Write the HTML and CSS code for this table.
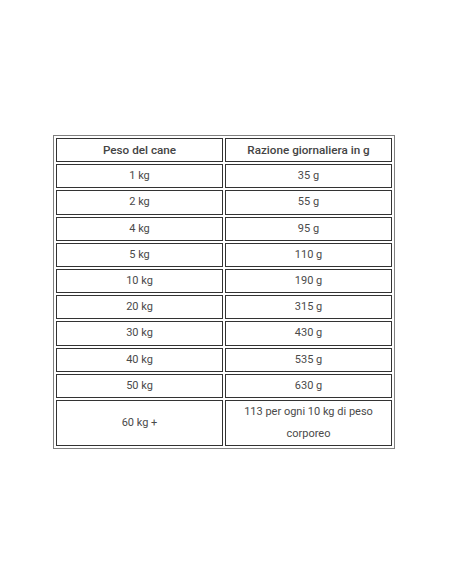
FILE: index.html
```html
<!DOCTYPE html>
<html lang="it">
<head>
<meta charset="utf-8">
<link rel="stylesheet" href="styles.css">
</head>
<body>
<div class="wrap">
<table class="razioni">
<thead>
<tr><th>Peso del cane</th><th>Razione giornaliera in g</th></tr>
</thead>
<tbody>
<tr><td>1 kg</td><td>35 g</td></tr>
<tr><td>2 kg</td><td>55 g</td></tr>
<tr><td>4 kg</td><td>95 g</td></tr>
<tr><td>5 kg</td><td>110 g</td></tr>
<tr><td>10 kg</td><td>190 g</td></tr>
<tr><td>20 kg</td><td>315 g</td></tr>
<tr><td>30 kg</td><td>430 g</td></tr>
<tr><td>40 kg</td><td>535 g</td></tr>
<tr><td>50 kg</td><td>630 g</td></tr>
<tr><td>60 kg +</td><td>113 per ogni 10 kg di peso corporeo</td></tr>
</tbody>
</table>
</div>
</body>
</html>
```
FILE: styles.css
```css
html, body {
  margin: 0;
  padding: 0;
  background: #fff;
}
.wrap {
  padding: 135px 0 0 53px;
}
.razioni {
  width: 342px;
  border: 1px solid #808080;
  border-spacing: 2px;
  border-collapse: separate;
  table-layout: fixed;
  font-family: Roboto, "Liberation Sans", sans-serif;
  font-size: 11px;
  color: #4a4a4a;
}
.razioni th,
.razioni td {
  border: 1px solid #333;
  text-align: center;
  vertical-align: middle;
  line-height: 22.2px;
  padding: 0 12px;
}
.razioni th {
  font-size: 11.7px;
  font-weight: 500;
  color: #444;
}
```
